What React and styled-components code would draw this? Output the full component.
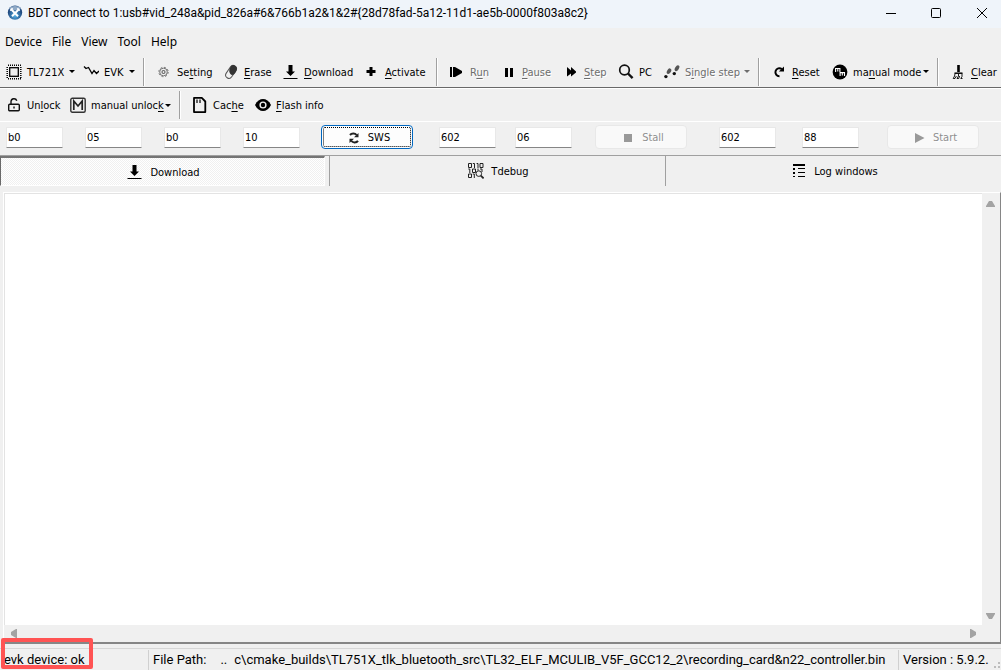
import React from "react";
import styled, { createGlobalStyle, css } from "styled-components";

const Global = createGlobalStyle`
  * { box-sizing: border-box; }
  body { margin: 0; background: #f0f0f0; }
  button, input, textarea { font: inherit; color: inherit; }
`;

const menuFont = `"Noto Sans", "Open Sans", sans-serif`;
const titleFont = `Roboto, "Noto Sans", sans-serif`;
const toolFont = `"DejaVu Sans Condensed", "Noto Sans", sans-serif`;

const Window = styled.div`
  position: relative;
  display: flex;
  flex-direction: column;
  min-height: 100vh;
  background: #f0f0f0;
  color: #000;
  font: 11px/16px ${toolFont};
  white-space: nowrap;
`;

const TitleBar = styled.header`
  display: flex;
  align-items: center;
  height: 28px;
  padding: 0 0 3px 7px;
  gap: 5px;
  background: #eff4fa;
  font: 12px/16px ${titleFont};
`;

const Title = styled.h1`
  flex: 1;
  margin: 0;
  font: inherit;
`;

const Caption = styled.button`
  display: grid;
  place-items: center;
  width: 45px;
  height: 24px;
  padding: 0;
  border: 0;
  background: none;
`;

const Captions = styled.div`
  display: flex;
  margin-right: -3px;
`;

const MenuBar = styled.nav`
  display: flex;
  align-items: center;
  height: 27px;
  padding-left: 5px;
  gap: 10px;
  font: 12px/16px ${menuFont};
`;

const MenuItem = styled.button`
  padding: 0;
  border: 0;
  background: none;
`;

const ToolBar = styled.div`
  display: flex;
  align-items: center;
  height: ${(p) => (p.$ruled ? 34 : 33)}px;
  padding-left: 6px;
  border-bottom: 1px solid #fff;
  ${(p) => p.$ruled && css`box-shadow: inset 0 -1px #696969;`}
  overflow: hidden;
`;

const ToolButton = styled.button`
  display: flex;
  flex: none;
  align-items: center;
  width: ${(p) => p.$width}px;
  height: 28px;
  padding: 0 8px 0 0;
  border: 0;
  background: none;
  text-align: left;
  &:disabled { color: #6d6d6d; text-shadow: 1px 1px #fff; }
`;

const ToolLabel = styled.span`
  padding: 2px 0 0 5px;
  u { text-underline-offset: 2px; text-decoration-thickness: 1px; }
`;

const Divider = styled.span`
  flex: none;
  width: 2px;
  height: 28px;
  margin-right: 11px;
  border-left: 1px solid #a0a0a0;
  border-right: 1px solid #fff;
`;

const Arrow = styled.span`
  margin-left: auto;
  border: 3px solid transparent;
  border-top-color: currentColor;
  border-bottom: 0;
`;

const Icon = styled.svg.attrs({ width: 16, height: 16, viewBox: "0 0 16 16", "aria-hidden": true })`
  flex: none;
  display: block;
`;

const CommandRow = styled.form`
  display: flex;
  align-items: center;
  height: 34px;
  padding: 0 22px 3px 6px;
  border-bottom: 1px solid #a0a0a0;
`;

const HexInput = styled.input`
  width: 57px;
  height: 21px;
  margin-right: ${(p) => p.$after || 22}px;
  padding: 0 1px;
  border: 1px solid #e8e8e8;
  border-bottom-color: #868686;
  border-radius: 1px;
  background: #fff;
  outline: 0;
`;

const PushButton = styled.button`
  display: flex;
  align-items: center;
  justify-content: center;
  gap: 6px;
  width: 92px;
  height: 24px;
  margin-right: ${(p) => p.$after || 0}px;
  padding: 2px 0 0 2px;
  border: 1px solid #e8e8e8;
  border-radius: 4px;
  background: #f9f9f9;
  &:disabled { color: #8f8f8f; text-shadow: 1px 1px #fff; }
  ${(p) => p.$focused && css`
    border-color: #0067c0;
    background: #fdfdfd;
    outline: 1px dotted #000;
    outline-offset: -3px;
  `}
`;

const Tabs = styled.div`
  display: grid;
  grid-template-columns: 330fr 336fr 335fr;
  height: 30px;
  margin-bottom: 6px;
`;

const TabSlot = styled.div`
  display: flex;
  padding-right: ${(p) => (p.$selected ? 4 : 0)}px;
  border-right: 1px solid #a0a0a0;
  &:last-child { border: 0; }
`;

const Tab = styled.button`
  display: flex;
  flex: 1;
  align-items: center;
  justify-content: center;
  gap: 7px;
  padding: 0 0 0 2px;
  border: 0;
  background: none;
  &[aria-selected="true"] {
    border: 1px solid #fff;
    border-top: 2px solid #757575;
    border-left: 1px solid #696969;
    background: repeating-conic-gradient(#f0f0f0 0 25%, #fff 0 50%) 0 0 / 2px 2px;
  }
`;

const TabLabel = styled.span`
  padding-top: 2px;
`;

const Viewer = styled.main`
  display: grid;
  flex: 1;
  grid-template: 1fr 17px / 1fr 17px;
  margin-left: 3px;
  padding: 0 1px 0 0;
  border: 1px solid #fff;
  border-right: 1px solid #868686;
  border-bottom: 2px solid #868686;
`;

const Output = styled.textarea`
  display: block;
  width: 100%;
  height: 100%;
  padding: 2px;
  border: 1px solid #e3e3e3;
  border-width: 1px 0 0 1px;
  border-radius: 0;
  background: #fff;
  outline: 0;
  resize: none;
`;

const ScrollTrack = styled.div`
  display: flex;
  flex-direction: ${(p) => (p.$vertical ? "column" : "row")};
  align-items: center;
  justify-content: space-between;
  padding: ${(p) => (p.$vertical ? "2px 0 0" : "0 0 0 1px")};
`;

const ScrollButton = styled.button`
  display: block;
  width: 17px;
  height: 17px;
  padding: 0;
  border: 0;
  background: none;
  color: #a3a3a3;
`;

const StatusBar = styled.footer`
  display: flex;
  align-items: center;
  height: 22px;
  margin-top: 4px;
  border-top: 1px solid #d7d7d7;
  font: 13px/16px ${titleFont};
`;

const StatusCell = styled.div`
  display: flex;
  flex: ${(p) => (p.$width ? `0 0 ${p.$width}px` : "1")};
  min-width: 0;
  height: 20px;
  padding: 2px 0 0 4px;
  border-left: ${(p) => (p.$first ? 0 : "1px solid #d0d0d0")};
`;

const PathLabel = styled.span`
  margin-right: 14px;
`;

const PathEllipsis = styled.span`
  margin-right: 7px;
`;

const Grip = styled.svg`
  position: absolute;
  right: 0;
  bottom: 1px;
`;

const Highlight = styled.div`
  position: absolute;
  left: 1px;
  bottom: 1px;
  width: 92px;
  height: 31px;
  border: 4px solid #ff5353;
  border-radius: 2px;
  pointer-events: none;
`;

const icons = {
  chip: (
    <g fill="none" stroke="#000">
      <rect x="3.7" y="3.7" width="8.6" height="8.6" strokeWidth="1.3" />
      <path d="M2 1.2H15M2 14.8H15M1.2 3V14M14.8 3V14" strokeWidth="1.5" strokeDasharray="1 1" />
    </g>
  ),
  wave: <path d="M1 2.5 3 4.5 5.5 3.5 9 9.5 11 6.5 13.5 9.5 16 7" fill="none" stroke="#000" strokeWidth="1.3" />,
  gear: (
    <g fill="none" stroke="#666">
      <circle cx="7.5" cy="8" r="3.8" strokeWidth="0.9" />
      <circle cx="7.5" cy="8" r="4.7" strokeWidth="0.9" strokeDasharray="1.9 1.79" />
      <circle cx="7.5" cy="8" r="1.5" strokeWidth="1.2" />
    </g>
  ),
  eraser: (
    <g transform="rotate(34 8 8)">
      <rect x="4.7" y="0.9" width="6.6" height="14" rx="3.3" fill="#f0f0f0" stroke="#555" />
      <path d="M6.3 8.5C4 6 4 .4 8 .4S12.4 5 11.8 8.5C10.5 11 8.5 10.5 6.3 8.5Z" fill="#333" />
    </g>
  ),
  download: <path d="M5.5 1H9.5V7.5H12L7.5 12 3 7.5H5.5ZM.5 14H14.5V15H.5Z" />,
  plus: <path d="M5.5 3H8.5V6H11.5V9H8.5V12H5.5V9H2.5V6H5.5Z" />,
  run: <path d="M1 3H3V13H1ZM4 3H6L13 7V9L6 13H4Z" />,
  pause: <path d="M4 4H7V13H4ZM9 4H12V13H9Z" />,
  step: <path d="M4 3 8 6.5V3L13 7.5V8.5L8 12.5V9.5L4 12.5Z" />,
  search: (
    <g fill="none" stroke="#111">
      <circle cx="6.5" cy="6" r="4.8" strokeWidth="1.7" />
      <path d="m10 9.5 4.6 4.6" strokeWidth="2.4" />
    </g>
  ),
  feet: (
    <g fill="#555">
      <ellipse cx="5" cy="7.2" rx="1.9" ry="3" transform="rotate(32 5 7.2)" />
      <circle cx="1.9" cy="12.6" r="1.7" fill="#111" />
      <ellipse cx="13" cy="4.2" rx="1.9" ry="3.2" transform="rotate(32 13 4.2)" />
      <circle cx="10.3" cy="9.6" r="1.7" fill="#111" />
    </g>
  ),
  reset: (
    <g>
      <path d="M8.5 12.2A4 4 0 1 1 10.8 5" fill="none" stroke="#000" strokeWidth="2" />
      <path d="M13 2.5V7.6H7.9Z" />
    </g>
  ),
  manualMode: (
    <g>
      <circle cx="8" cy="8" r="7.4" />
      <path d="M3.6 8V4.5H7.9V8M5.8 4.5V7.5M8.1 12V8.6H12.5V12M10.3 8.6V11.5" fill="none" stroke="#fff" strokeWidth="1.1" />
    </g>
  ),
  broom: (
    <g fill="none" stroke="#000">
      <path d="M8.5 1V8" strokeWidth="2.6" />
      <path d="M4.5 9.2H12.5" strokeWidth="1.5" />
      <path d="M5 9.5 4.6 12 3.2 14.5H5L6.4 12M8.5 10V12L7 14.5H8.8L9.6 12M12 9.5V12.5L10.8 14.5H12.5" strokeWidth="0.9" />
    </g>
  ),
  unlock: (
    <g fill="none" stroke="#111" strokeWidth="1.4">
      <rect x="2.7" y="7.2" width="10.6" height="6.6" rx="1" />
      <path d="M5 7V4.5a3 3 0 0 1 5.8-.8M8 9.5v2" />
    </g>
  ),
  manualUnlock: (
    <g fill="none" stroke="#333">
      <rect x="0.8" y="1.3" width="14.4" height="13.9" rx="1.5" strokeWidth="1.4" />
      <path d="M3.8 13V4L8 9 12.2 4V13" stroke="#222" strokeWidth="1.7" />
    </g>
  ),
  card: (
    <g fill="none" stroke="#000">
      <path d="M2 .9H9.8L13.3 4.5V15.1H2Z" strokeWidth="1.8" strokeLinejoin="round" />
      <path d="M5 2.5V6M8 2.5V6" strokeWidth="1.2" />
    </g>
  ),
  eye: (
    <g>
      <path d="M0 8C2 3.8 5 2 8 2S14 3.8 16 8C14 12.2 11 14 8 14S2 12.2 0 8Z" />
      <circle cx="8" cy="8" r="3.6" fill="#f0f0f0" />
      <circle cx="8" cy="8" r="2.2" />
    </g>
  ),
  refresh: (
    <g>
      <path d="M4 5C5.5 3.2 9 3 10.6 5M12 10.8C10.5 12.8 7 13 5.4 11" fill="none" stroke="#222" strokeWidth="2" />
      <path d="M12.5 3V7.2H8ZM3.5 13V8.8H8Z" fill="#222" />
    </g>
  ),
  stop: <path d="M4 4H12V12H4Z" fill="#999" />,
  play: <path d="M4 3 13.5 8 4 13Z" fill="#999" />,
  binary: (
    <g fill="none" stroke="#222">
      <path d="M.5 .5H3.5V4.5H.5ZM4.8 .5H6.5V5M8.6 .5H10V5M12 .5H15V4.5H12ZM.3 6H1.8V10M4.5 6H7.5V9.5H4.5ZM10 5.5V7.5M12 6H14V9M.5 11H3.5V14.5H.5ZM4.8 11H6.3V15" />
      <circle cx="10.8" cy="10.6" r="2.8" fill="#f0f0f0" />
      <path d="m12.8 12.6 2.8 2.8" strokeWidth="1.8" />
    </g>
  ),
  list: <path d="M2 1H14V3H2ZM2 5H4V7H2ZM7 5H14V6H7ZM2 9H4V11H2ZM7 9H14V10H7ZM2 13H4V14H2ZM7 13H14V14H7Z" />,
};

const Glyph = ({ name }) => <Icon>{icons[name]}</Icon>;

/* "&" marks the mnemonic letter, as in native menus */
const Mnemonic = ({ text }) => {
  const [before, after] = text.split("&");
  if (after === undefined) return text;
  return <>{before}<u>{after[0]}</u>{after.slice(1)}</>;
};

const Tool = ({ icon, text, width, menu, disabled }) => (
  <ToolButton type="button" $width={width} disabled={disabled} aria-haspopup={menu ? "menu" : undefined}>
    <Glyph name={icon} />
    <ToolLabel><Mnemonic text={text} /></ToolLabel>
    {menu && <Arrow />}
  </ToolButton>
);

const Page = ({ icon, text, selected = false }) => (
  <TabSlot $selected={selected}>
    <Tab type="button" role="tab" aria-selected={selected}>
      <Glyph name={icon} />
      <TabLabel>{text}</TabLabel>
    </Tab>
  </TabSlot>
);

const Scroll = ({ label, points }) => (
  <ScrollButton type="button" aria-label={label}>
    <svg width="17" height="17" viewBox="0 0 17 17" display="block"><polygon points={points} fill="currentColor" /></svg>
  </ScrollButton>
);

export default function App() {
  return (
    <Window>
      <Global />
      <TitleBar>
        <Icon>
          <defs>
            <radialGradient id="orb" cx="50%" cy="70%">
              <stop offset="0" stopColor="#58b4e8" />
              <stop offset="1" stopColor="#204a80" />
            </radialGradient>
          </defs>
          <circle cx="8" cy="7.6" r="7.2" fill="url(#orb)" />
          <path d="M2 3.2C4 .4 12 .4 14 3.2 11 6 5 6 2 3.2Z" fill="#8fa9c6" />
          <path d="m4.6 4.8 6.4 6.4M11.4 4.8 5 11.2" stroke="#fff" strokeWidth="2" />
          <path d="m3.2 5.6 2.4-2.4M10.4 3.2l2.4 2.4" stroke="#fff" strokeWidth="1.6" />
        </Icon>
        <Title>{"BDT connect to 1:usb#vid_248a&pid_826a#6&766b1a2&1&2#{28d78fad-5a12-11d1-ae5b-0000f803a8c2}"}</Title>
        <Captions>
          <Caption aria-label="Minimize"><Icon><path d="M2 8.5H12" stroke="#000" /></Icon></Caption>
          <Caption aria-label="Maximize"><Icon><rect x="2.5" y="3.5" width="9" height="9" rx="1" fill="none" stroke="#000" /></Icon></Caption>
          <Caption aria-label="Close"><Icon><path d="m3 3 10 10M13 3 3 13" stroke="#000" /></Icon></Caption>
        </Captions>
      </TitleBar>

      <MenuBar>
        {["Device", "File", "View", "Tool", "Help"].map((m) => <MenuItem key={m} type="button">{m}</MenuItem>)}
      </MenuBar>

      <ToolBar role="toolbar" $ruled>
        <Tool icon="chip" text="TL721X" width={77} menu />
        <Tool icon="wave" text="EVK" width={60} menu />
        <Divider />
        <Tool icon="gear" text="Se&tting" width={67} />
        <Tool icon="eraser" text="&Erase" width={60} />
        <Tool icon="download" text="&Download" width={81} />
        <Tool icon="plus" text="&Activate" width={72} />
        <Divider />
        <Tool icon="run" text="R&un" width={52} disabled />
        <Tool icon="pause" text="&Pause" width={62} disabled />
        <Tool icon="step" text="&Step" width={55} disabled />
        <Tool icon="search" text="PC" width={46} />
        <Tool icon="feet" text="S&ingle step" width={94} menu disabled />
        <Divider />
        <Tool icon="reset" text="&Reset" width={61} />
        <Tool icon="manualMode" text="ma&nual mode" width={105} menu />
        <Divider />
        <Tool icon="broom" text="&Clear" width={60} />
      </ToolBar>

      <ToolBar role="toolbar">
        <Tool icon="unlock" text="Un&lock" width={64} />
        <Tool icon="manualUnlock" text="manual unloc&k" width={109} menu />
        <Divider />
        <Tool icon="card" text="Cac&he" width={63} />
        <Tool icon="eye" text="&Flash info" width={80} />
      </ToolBar>

      <CommandRow onSubmit={(e) => e.preventDefault()}>
        <HexInput aria-label="SWS address high" defaultValue="b0" />
        <HexInput aria-label="SWS address low" defaultValue="05" />
        <HexInput aria-label="SWS register" defaultValue="b0" />
        <HexInput aria-label="SWS value" defaultValue="10" $after={21} />
        <PushButton type="button" $focused $after={26}><Glyph name="refresh" />SWS</PushButton>
        <HexInput aria-label="Stall address" defaultValue="602" $after={19} />
        <HexInput aria-label="Stall value" defaultValue="06" $after={23} />
        <PushButton type="button" disabled $after={32}><Glyph name="stop" />Stall</PushButton>
        <HexInput aria-label="Start address" defaultValue="602" $after={26} />
        <HexInput aria-label="Start value" defaultValue="88" $after={28} />
        <PushButton type="button" disabled><Glyph name="play" />Start</PushButton>
      </CommandRow>

      <Tabs role="tablist">
        <Page icon="download" text="Download" selected />
        <Page icon="binary" text="Tdebug" />
        <Page icon="list" text="Log windows" />
      </Tabs>

      <Viewer>
        <Output aria-label="Output" readOnly />
        <ScrollTrack $vertical>
          <Scroll label="Scroll up" points="4,12 4,11 7,6 10,6 13,11 13,12" />
          <Scroll label="Scroll down" points="4,5 13,5 13,6 10,11 7,11 4,6" />
        </ScrollTrack>
        <ScrollTrack>
          <Scroll label="Scroll left" points="12,4 12,13 11,13 6,10 6,7 11,4" />
          <Scroll label="Scroll right" points="5,4 6,4 11,7 11,10 6,13 5,13" />
        </ScrollTrack>
      </Viewer>

      <StatusBar>
        <StatusCell $width={148} $first>evk device: ok</StatusCell>
        <StatusCell>
          <PathLabel>File Path:</PathLabel>
          <PathEllipsis>..</PathEllipsis>
          <span>{"c\\cmake_builds\\TL751X_tlk_bluetooth_src\\TL32_ELF_MCULIB_V5F_GCC12_2\\recording_card&n22_controller.bin"}</span>
        </StatusCell>
        <StatusCell $width={103}>Version : 5.9.2.</StatusCell>
      </StatusBar>
      <Grip width="8" height="8" viewBox="0 0 8 8" aria-hidden="true">
        <path d="M5 1H7V3H5ZM5 5H7V7H5ZM1 5H3V7H1Z" fill="#bdbdbd" />
      </Grip>
      <Highlight />
    </Window>
  );
}
